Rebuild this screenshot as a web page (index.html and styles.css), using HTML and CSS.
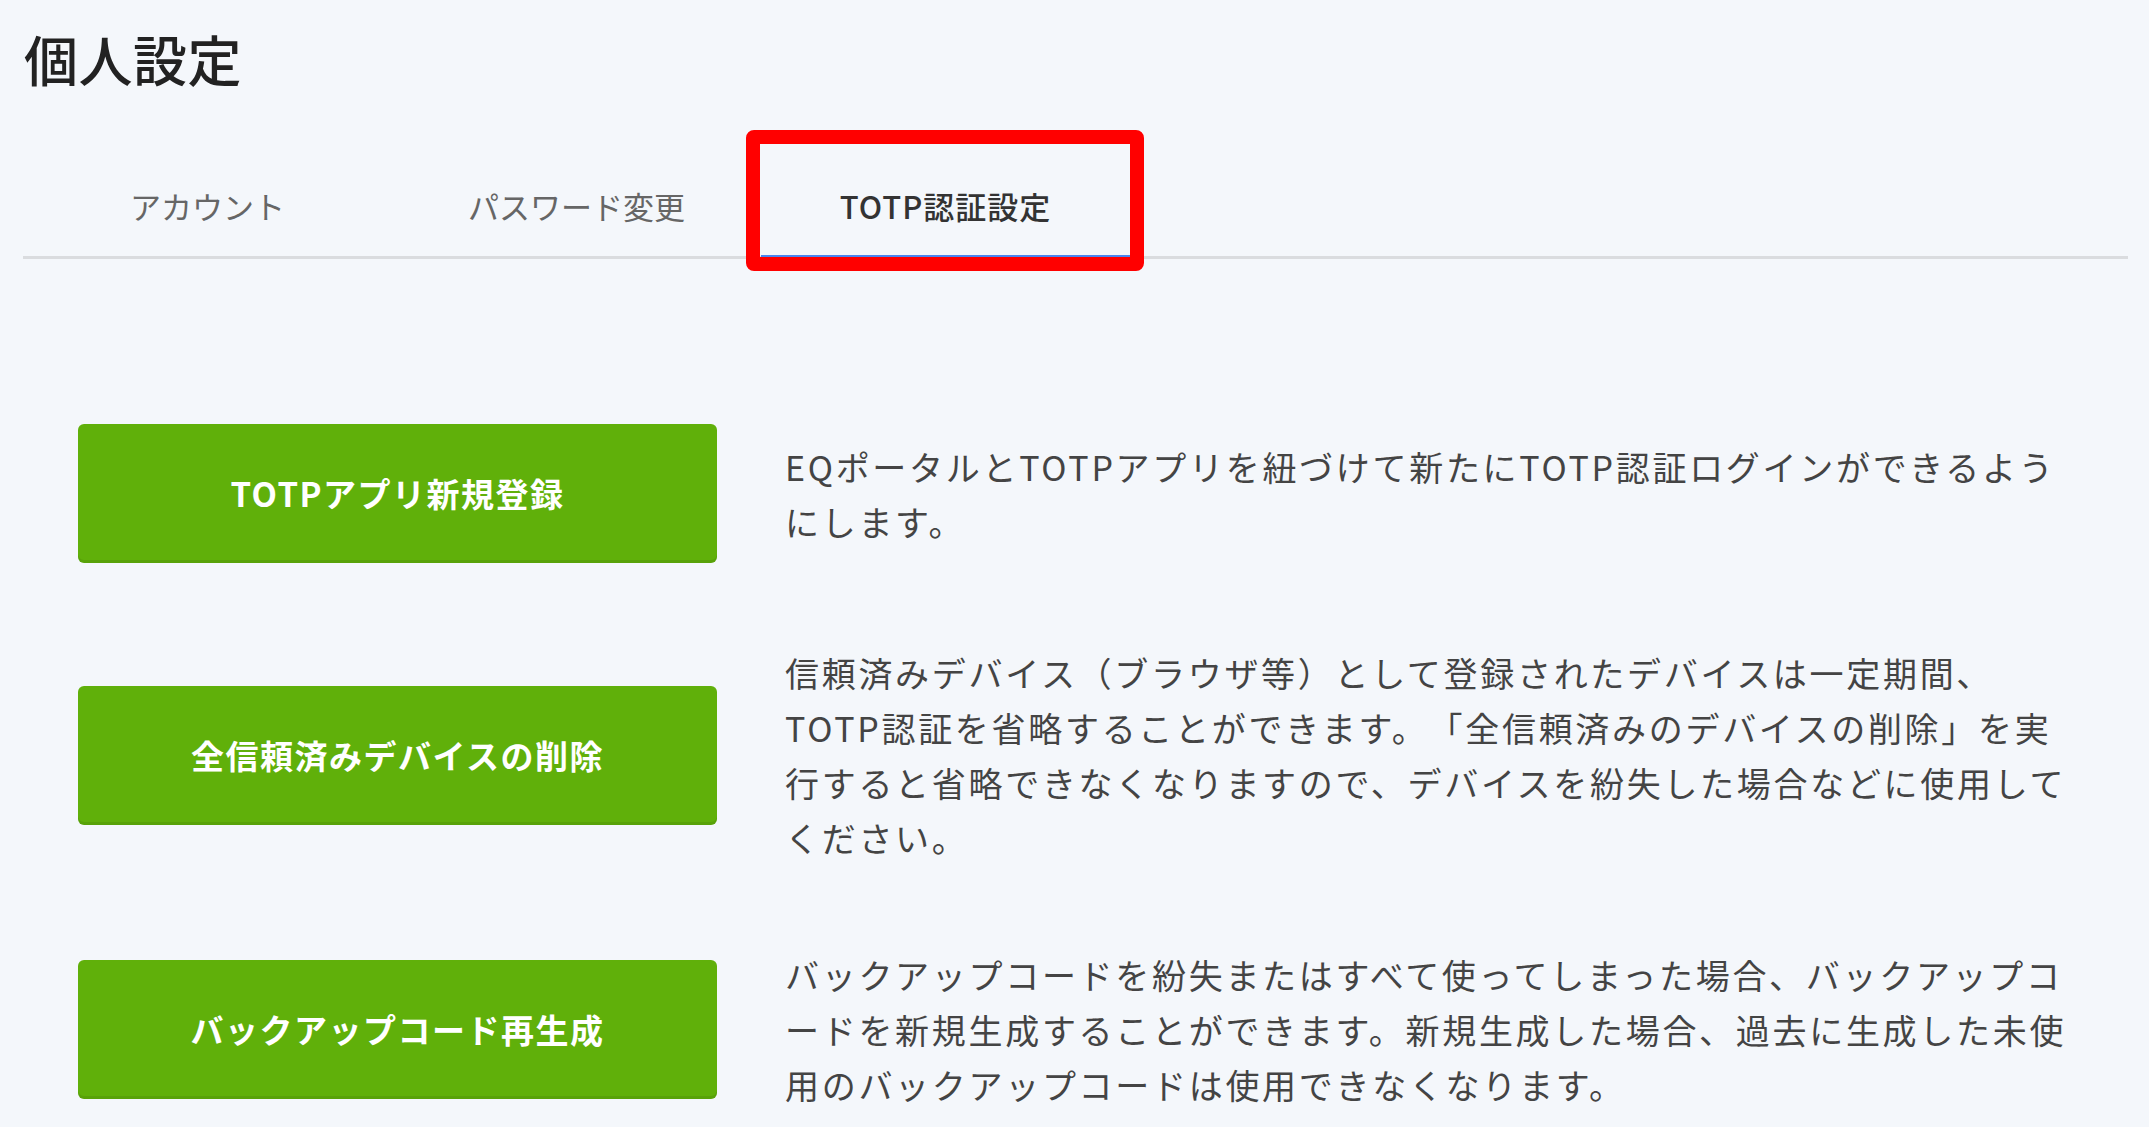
FILE: index.html
```html
<!DOCTYPE html>
<html lang="ja">
<head>
<meta charset="utf-8">
<title>個人設定</title>
<link rel="stylesheet" href="styles.css">
</head>
<body>
<main class="page">
  <h1 class="title">個人設定</h1>
  <nav class="tabs">
    <div class="tab">アカウント</div>
    <div class="tab">パスワード変更</div>
    <div class="tab active">TOTP認証設定<span class="highlight"></span></div>
  </nav>
  <section class="actions">
    <div class="row">
      <button class="btn">TOTPアプリ新規登録</button>
      <p class="desc">EQポータルとTOTPアプリを紐づけて新たにTOTP認証ログインができるようにします。</p>
    </div>
    <div class="row">
      <button class="btn">全信頼済みデバイスの削除</button>
      <p class="desc">信頼済みデバイス（ブラウザ等）として登録されたデバイスは一定期間、<br>TOTP認証を省略することができます。「全信頼済みのデバイスの削除」を実行すると省略できなくなりますので、デバイスを紛失した場合などに使用してください。</p>
    </div>
    <div class="row">
      <button class="btn">バックアップコード再生成</button>
      <p class="desc">バックアップコードを紛失またはすべて使ってしまった場合、バックアップコードを新規生成することができます。新規生成した場合、過去に生成した未使用のバックアップコードは使用できなくなります。</p>
    </div>
  </section>
</main>
</body>
</html>
```
FILE: styles.css
```css
html, body {
  margin: 0;
  padding: 0;
}
body {
  background: #f4f7fb;
  font-family: "Noto Sans CJK JP", "Noto Sans", sans-serif;
  color: #333;
  text-spacing-trim: space-all;
  font-feature-settings: "chws" 0, "halt" 0;
}
.page {
  padding: 32px 21px 0 23px;
}
.title {
  margin: 0;
  padding-left: 1px;
  font-size: 54px;
  line-height: 54px;
  font-weight: 500;
  letter-spacing: 0.5px;
  color: #222;
}
.tabs {
  display: flex;
  margin-top: 58px;
  border-bottom: 3px solid #dadcdf;
}
.tab {
  position: relative;
  width: 369px;
  text-align: center;
  padding: 42px 0 29px;
  font-size: 31px;
  line-height: 40px;
  color: #666;
  border-bottom: 4px solid transparent;
  margin-bottom: -3px;
}
.tab.active {
  color: #333;
  font-weight: 500;
  letter-spacing: 1px;
  border-bottom-color: #4a86f0;
}
.highlight {
  position: absolute;
  left: -15px;
  right: -14px;
  top: -14px;
  bottom: -16px;
  border: 14px solid #ff0000;
  border-radius: 8px;
}
.actions {
  display: flex;
  flex-direction: column;
  gap: 82px;
  padding: 165px 0 0 55px;
}
.row {
  display: flex;
  align-items: center;
  gap: 68px;
}
.btn {
  flex: none;
  width: 639px;
  height: 139px;
  background: #60b00a;
  border: none;
  border-radius: 6px;
  box-shadow: inset 0 -3px 0 rgba(0, 0, 0, 0.08);
  color: #fff;
  font-family: "Noto Sans CJK JP", "Noto Sans", sans-serif;
  font-size: 33px;
  font-weight: 700;
  letter-spacing: 1.5px;
  line-height: 1;
  padding: 0;
  text-spacing-trim: space-all;
}
.desc {
  margin: 0;
  width: 1292px;
  font-size: 34px;
  letter-spacing: 2.7px;
  line-height: 55px;
  color: #444;
}
```
